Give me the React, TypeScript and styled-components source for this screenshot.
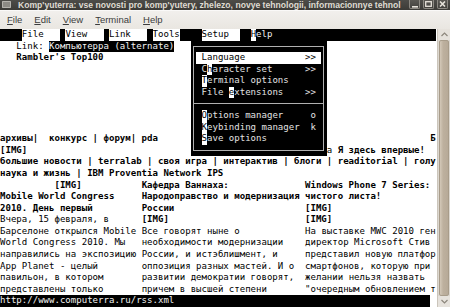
import React from 'react';
import styled, { createGlobalStyle, css } from 'styled-components';

const CW = 5.4486;
const RH = 11.583;

const GlobalStyle = createGlobalStyle`
  html, body { margin: 0; padding: 0; background: #fff; }
  body { width: 450px; height: 307px; overflow: hidden; }
`;

const Window = styled.div`
  width: 450px;
  height: 307px;
  display: flex;
  flex-direction: column;
  overflow: hidden;
  background: #edebe7;
`;

const TitleBar = styled.div`
  height: 10px;
  flex: none;
  display: flex;
  align-items: stretch;
  background: linear-gradient(#4d4c48, #3c3b37);
  color: #dfdbd2;
  font: bold 8.6px/10px 'Liberation Sans', Arial, sans-serif;
`;

const TitleIcon = styled.div`
  width: 9px;
  height: 7px;
  margin: 1px 0 0 2px;
  border-radius: 1px;
  background: #8d8b85;
  box-shadow: inset 0 0 0 1px #b5b3ad;
  flex: none;
`;

const TitleText = styled.div`
  flex: 1;
  min-width: 0;
  white-space: nowrap;
  padding-left: 7px;
`;

const WinButtons = styled.div`
  display: flex;
  gap: 3px;
  padding: 0 2px 0 4px;
  flex: none;
`;

const WinButton = styled.div`
  width: 11px;
  height: 9px;
  box-sizing: border-box;
  border: 1px solid #8c8982;
  border-top: none;
  border-radius: 0 0 2px 2px;
  background: linear-gradient(#5a5853, #43423e);
  display: flex;
  align-items: center;
  justify-content: center;
`;

const MenuBar = styled.div`
  height: 19px;
  flex: none;
  display: flex;
  align-items: center;
  padding-left: 1px;
  background: linear-gradient(#f2f0ed, #e9e6e1);
  box-shadow: inset 0 1px #faf9f8;
  font: 9.5px 'Liberation Sans', Arial, sans-serif;
  color: #3c3c3c;
`;

const MenuItem = styled.div`
  padding: 0 6px;
  & u { text-decoration-thickness: 1px; text-underline-offset: 1px; }
`;

const Main = styled.div`
  flex: 1;
  display: flex;
  min-height: 0;
`;

const Terminal = styled.div`
  position: relative;
  width: 437px;
  flex: none;
  background: #fff;
  font-family: 'DejaVu Sans Mono', monospace;
  font-size: 9.05px;
  color: #000;
  overflow: hidden;
`;

const Row = styled.div`
  display: flex;
  height: ${RH}px;
  line-height: ${RH}px;
`;

type Style = 'n' | 'b' | 'inv' | 'hot';

const Seg = styled.span<{ $s: Style }>`
  white-space: pre;
  display: inline-block;
  height: ${RH}px;
  vertical-align: top;
  ${(p) =>
    p.$s === 'b' &&
    css`
      font-weight: bold;
    `}
  ${(p) =>
    p.$s === 'inv' &&
    css`
      background: #000;
      color: #f2f2f2;
    `}
  ${(p) =>
    p.$s === 'hot' &&
    css`
      background: #fff;
      color: #000;
    `}
`;

const DropMenu = styled.div`
  position: absolute;
  left: ${35 * CW}px;
  top: ${RH}px;
  width: ${25 * CW}px;
  height: ${10 * RH}px;
  box-sizing: border-box;
  padding: ${RH / 2}px ${CW / 2}px;
  background: #000;
`;

const DropFrame = styled.div`
  height: 100%;
  box-sizing: border-box;
  border: 1px solid #b0b0b0;
  padding: ${RH / 2 - 1}px ${CW / 2 - 1}px;
`;

const DropItem = styled.div<{ $sel?: boolean }>`
  display: block;
  height: ${RH}px;
  line-height: ${RH}px;
  white-space: pre;
  color: ${(p) => (p.$sel ? '#000' : '#e2e2e2')};
  background: ${(p) => (p.$sel ? '#fff' : 'transparent')};
`;

const DropSep = styled.div`
  height: ${RH}px;
  margin: 0 ${-(CW / 2 - 1)}px;
  position: relative;
  &::after {
    content: '';
    position: absolute;
    left: 0;
    right: 0;
    top: ${Math.floor(RH / 2)}px;
    height: 1px;
    background: #b0b0b0;
  }
`;

const ScrollBar = styled.div`
  flex: 1;
  display: flex;
  flex-direction: column;
  background: #dcd7cf;
  border-left: 1px solid #cbc5bb;
`;

const ScrollArrow = styled.div`
  height: 11px;
  flex: none;
  display: flex;
  align-items: center;
  justify-content: center;
  background: #e6e2dc;
`;

const Thumb = styled.div`
  flex: 1;
  margin: 0 1px;
  border: 1px solid #a89c8a;
  border-radius: 2px;
  background: linear-gradient(90deg, #d3c8b8, #bdb09e 40%, #b7aa98);
`;

type Part = [number, string, Style?];

const TermLine: React.FC<{ parts?: Part[] }> = ({ parts = [] }) => {
  const segs: React.ReactNode[] = [];
  let cur = 0;
  parts.forEach(([c, t, s = 'n'], i) => {
    if (c > cur) segs.push(<Seg key={'g' + i} $s="n">{' '.repeat(c - cur)}</Seg>);
    segs.push(
      <Seg key={i} $s={s}>
        {t}
      </Seg>
    );
    cur = c + [...t].length;
  });
  return <Row>{segs}</Row>;
};

const rows: Part[][] = [
  [
    [0, '    ', 'inv'],
    [4, 'File   '],
    [11, ' ', 'inv'],
    [12, 'View   '],
    [19, ' ', 'inv'],
    [20, 'Link   '],
    [27, ' ', 'inv'],
    [28, 'Tools'],
    [33, '    ', 'inv'],
    [37, 'Setup  '],
    [44, '  ', 'inv'],
    [46, 'H', 'hot'],
    [47, 'elp' + ' '.repeat(30), 'inv'],
  ],
  [
    [3, 'Link: '],
    [9, 'Компьютерра (alternate)', 'inv'],
  ],
  [[3, "Rambler's Top100", 'b']],
  [],
  [],
  [],
  [],
  [],
  [],
  [
    [0, 'архивы|  конкурс | форум| pda', 'b'],
    [79, 'Б', 'b'],
  ],
  [
    [0, '[IMG]', 'b'],
    [60, 'а'],
    [61, ' Я здесь впервые!', 'b'],
  ],
  [[0, 'большие новости | terralab | своя игра | интерактив | блоги | readitorial | голу', 'b']],
  [[0, 'наука и жизнь | IBM Proventia Network IPS', 'b']],
  [
    [10, '[IMG]', 'b'],
    [26, 'Кафедра Ваннаха:', 'b'],
    [56, 'Windows Phone 7 Series:', 'b'],
  ],
  [
    [0, 'Mobile World Congress', 'b'],
    [26, 'Народоправство и модернизация', 'b'],
    [56, 'чистого листа!', 'b'],
  ],
  [
    [0, '2010. День первый', 'b'],
    [26, 'России', 'b'],
    [56, '[IMG]', 'b'],
  ],
  [
    [0, 'Вчера, 15 февраля, в'],
    [26, '[IMG]', 'b'],
    [56, '[IMG]', 'b'],
  ],
  [
    [0, 'Барселоне открылся Mobile'],
    [26, 'Все говорят ныне о'],
    [56, 'На выставке MWC 2010 ген'],
  ],
  [
    [0, 'World Congress 2010. Мы'],
    [26, 'необходимости модернизации'],
    [56, 'директор Microsoft Стив'],
  ],
  [
    [0, 'направились на экспозицию'],
    [26, 'России, и истэблишмент, и'],
    [56, 'представил новую платфор'],
  ],
  [
    [0, 'App Planet - целый'],
    [26, 'оппозиция разных мастей. И о'],
    [56, 'смартфонов, которую при'],
  ],
  [
    [0, 'павильон, в котором'],
    [26, 'развитии демократии говорят,'],
    [56, 'желании нельзя назвать'],
  ],
  [
    [0, 'представлены только'],
    [26, 'причем в высшей степени'],
    [56, '"очередным обновлением т'],
  ],
  [[0, 'http://www.computerra.ru/rss.xml' + ' '.repeat(47), 'inv']],
];

type MItem = { pre: string; hot: string; post: string; key?: string; sel?: boolean } | 'sep';

const menuItems: MItem[] = [
  { pre: '', hot: '', post: 'Language', key: '>>', sel: true },
  { pre: 'C', hot: 'h', post: 'aracter set', key: '>>' },
  { pre: '', hot: 'T', post: 'erminal options' },
  { pre: 'File ', hot: 'e', post: 'xtensions', key: '>>' },
  'sep',
  { pre: '', hot: 'O', post: 'ptions manager', key: 'o' },
  { pre: '', hot: 'K', post: 'eybinding manager', key: 'k' },
  { pre: '', hot: 'S', post: 'ave options' },
];

const Chevron: React.FC<{ up?: boolean }> = ({ up }) => (
  <svg width="7" height="5" viewBox="0 0 7 5">
    <path d={up ? 'M0.5 4 L3.5 1 L6.5 4' : 'M0.5 1 L3.5 4 L6.5 1'} fill="none" stroke="#8d877d" strokeWidth="1.2" />
  </svg>
);

export default function App() {
  return (
    <>
      <GlobalStyle />
      <Window>
        <TitleBar>
          <TitleIcon />
          <TitleText>
            Komp'yuterra: vse novosti pro komp'yutery, zhelezo, novye tehnologii, informacionnye tehnol
          </TitleText>
          <WinButtons>
            <WinButton>
              <svg width="6" height="7" viewBox="0 0 6 7">
                <rect x="0" y="5" width="6" height="1.6" fill="#e6e2da" />
              </svg>
            </WinButton>
            <WinButton>
              <svg width="7" height="6" viewBox="0 0 7 6">
                <rect x="0.7" y="0.7" width="5.6" height="4.6" fill="none" stroke="#e6e2da" strokeWidth="1.3" />
              </svg>
            </WinButton>
            <WinButton>
              <svg width="7" height="6" viewBox="0 0 7 6">
                <path d="M1 0.5 L6 5.5 M6 0.5 L1 5.5" stroke="#e6e2da" strokeWidth="1.6" />
              </svg>
            </WinButton>
          </WinButtons>
        </TitleBar>
        <MenuBar>
          <MenuItem><u>F</u>ile</MenuItem>
          <MenuItem><u>E</u>dit</MenuItem>
          <MenuItem><u>V</u>iew</MenuItem>
          <MenuItem><u>T</u>erminal</MenuItem>
          <MenuItem><u>H</u>elp</MenuItem>
        </MenuBar>
        <Main>
          <Terminal>
            {rows.map((r, i) => (
              <TermLine key={i} parts={r} />
            ))}
            <DropMenu>
              <DropFrame>
                {menuItems.map((it, i) => {
                  if (it === 'sep') return <DropSep key={i} />;
                  const label = it.pre + it.hot + it.post;
                  const pad = ' '.repeat(19 - [...label].length);
                  const key = (it.key ?? '').padStart(2, ' ');
                  return (
                    <DropItem key={i} $sel={it.sel}>
                      {' ' + it.pre}
                      {it.hot && <Seg $s="hot">{it.hot}</Seg>}
                      {it.post + pad + key + ' '}
                    </DropItem>
                  );
                })}
              </DropFrame>
            </DropMenu>
          </Terminal>
          <ScrollBar>
            <ScrollArrow>
              <Chevron up />
            </ScrollArrow>
            <Thumb />
            <ScrollArrow>
              <Chevron />
            </ScrollArrow>
          </ScrollBar>
        </Main>
      </Window>
    </>
  );
}
